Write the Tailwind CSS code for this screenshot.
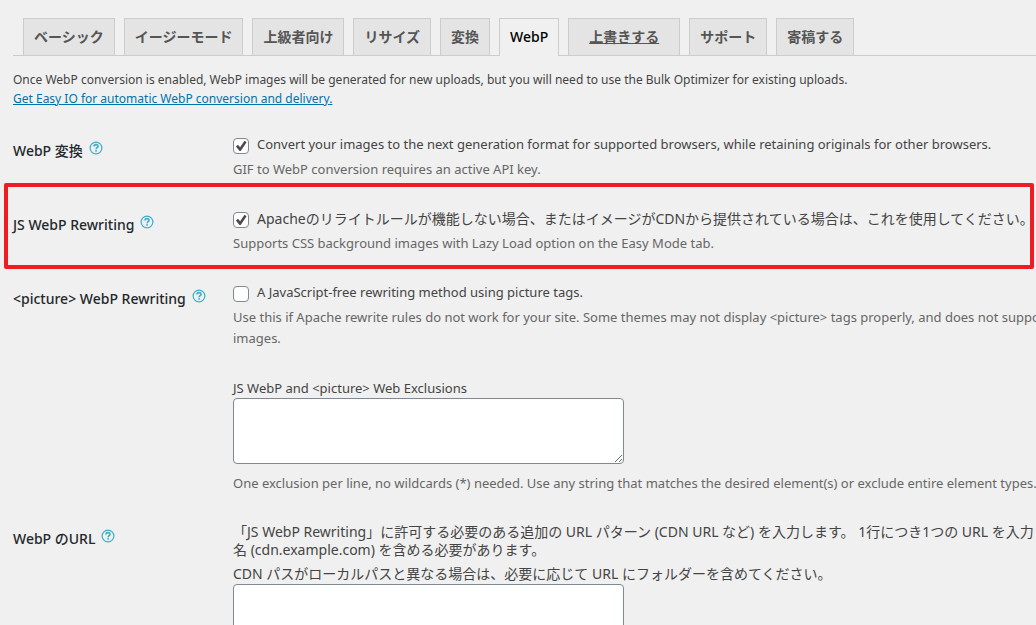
<!DOCTYPE html>
<html lang="ja">
  <head>
    <meta charset="UTF-8" />
    <meta name="viewport" content="width=device-width, initial-scale=1" />
    <title>EWWW Image Optimizer - WebP</title>
    <script src="https://cdn.jsdelivr.net/npm/@tailwindcss/browser@4"></script>
  </head>
  <body
    class="min-h-screen overflow-x-hidden bg-[#f0f0f0] font-['Noto_Sans','Noto_Sans_CJK_JP',sans-serif] text-[13px] text-[#444]"
  >
    <!-- Shared icons -->
    <svg class="hidden">
      <symbol id="help" viewBox="0 0 14 14">
        <circle cx="7" cy="7" r="5.9" fill="none" stroke="currentColor" stroke-width="1.2" />
        <path
          d="M5 5.5C5 4.2 5.9 3.6 7 3.6S9 4.3 9 5.4C9 6.7 7.1 6.7 7.1 8.3"
          fill="none"
          stroke="currentColor"
          stroke-width="1.6"
        />
        <rect x="6.3" y="9.1" width="1.6" height="1.6" fill="currentColor" />
      </symbol>
      <symbol id="check" viewBox="0 0 16 16">
        <path d="M2.9 8.4L5 6.8L7.1 9.3L11.5 2.8L13.6 4.2L7.7 13H6.5Z" fill="currentColor" />
      </symbol>
    </svg>

    <main class="pt-[18px] pl-[13px]">
      <!-- Tabs -->
      <nav
        class="flex gap-[9px] border-b border-[#ccc] pl-[10px] text-sm leading-9 font-bold whitespace-nowrap text-[#555]"
      >
        <button type="button" class="border border-b-0 border-[#ccc] bg-[#e4e4e4] px-[10px]">ベーシック</button>
        <button type="button" class="border border-b-0 border-[#ccc] bg-[#e4e4e4] px-[10px]">イージーモード</button>
        <button type="button" class="border border-b-0 border-[#ccc] bg-[#e4e4e4] px-[10px]">上級者向け</button>
        <button type="button" class="border border-b-0 border-[#ccc] bg-[#e4e4e4] px-[10px]">リサイズ</button>
        <button type="button" class="border border-b-0 border-[#ccc] bg-[#e4e4e4] px-[10px]">変換</button>
        <button
          type="button"
          class="-mb-px border border-b-0 border-[#ccc] bg-[#f0f0f0] px-[10px] pb-px font-medium text-black"
        >
          WebP
        </button>
        <a href="#" class="border border-b-0 border-[#ccc] bg-[#e4e4e4] px-5 underline decoration-[#0073aa]"
          >上書きする</a
        >
        <button type="button" class="border border-b-0 border-[#ccc] bg-[#e4e4e4] px-[10px]">サポート</button>
        <button type="button" class="border border-b-0 border-[#ccc] bg-[#e4e4e4] px-[10px]">寄稿する</button>
      </nav>

      <p class="mt-[14px] text-xs leading-[19px] whitespace-nowrap">
        Once WebP conversion is enabled, WebP images will be generated for new uploads, but you will need to use the
        Bulk Optimizer for existing uploads.<br />
        <a href="#" class="text-[#0073aa] underline">Get Easy IO for automatic WebP conversion and delivery.</a>
      </p>

      <form class="mt-3 whitespace-nowrap">
        <!-- WebP conversion -->
        <div class="grid grid-cols-[220px_1fr] pt-[15px] pb-[14px]">
          <div class="flex items-start gap-[6px] pt-[6px] text-sm leading-5 font-medium text-[#23282d]">
            <label for="webp">WebP 変換</label>
            <a href="#" aria-label="Help" class="text-[#3eadc9]"><svg class="size-[14px]"><use href="#help" /></svg></a>
          </div>
          <div>
            <label class="flex items-end gap-2 leading-[19px]">
              <span class="grid">
                <input
                  id="webp"
                  type="checkbox"
                  checked
                  class="peer col-start-1 row-start-1 size-4 appearance-none rounded-[4px] border border-[#7e8993] bg-white"
                />
                <svg
                  class="pointer-events-none invisible col-start-1 row-start-1 size-4 text-[#50484a] peer-checked:visible"
                >
                  <use href="#check" />
                </svg>
              </span>
              Convert your images to the next generation format for supported browsers, while retaining originals for
              other browsers.
            </label>
            <p class="mt-[5px] leading-[21px] text-[#666]">GIF to WebP conversion requires an active API key.</p>
          </div>
        </div>

        <!-- JS rewriting, highlighted -->
        <div class="relative grid grid-cols-[220px_1fr] pt-[15px] pb-[14px]">
          <div
            class="pointer-events-none absolute -top-[11px] right-[2px] -bottom-px -left-[9px] rounded-[2px] border-4 border-[#f01c24]"
          ></div>
          <div class="flex items-start gap-[6px] pt-[6px] text-sm leading-5 font-medium text-[#23282d]">
            <label for="webp-js">JS WebP Rewriting</label>
            <a href="#" aria-label="Help" class="text-[#3eadc9]"><svg class="size-[14px]"><use href="#help" /></svg></a>
          </div>
          <div>
            <label class="flex items-end gap-2 leading-[19px]">
              <span class="grid">
                <input
                  id="webp-js"
                  type="checkbox"
                  checked
                  class="peer col-start-1 row-start-1 size-4 appearance-none rounded-[4px] border border-[#7e8993] bg-white"
                />
                <svg
                  class="pointer-events-none invisible col-start-1 row-start-1 size-4 text-[#50484a] peer-checked:visible"
                >
                  <use href="#check" />
                </svg>
              </span>
              <span class="text-sm leading-[19px]"
                >Apacheのリライトルールが機能しない場合、またはイメージがCDNから提供されている場合は、これを使用してください。</span
              >
            </label>
            <p class="mt-[5px] leading-[21px] text-[#666]">
              Supports CSS background images with Lazy Load option on the Easy Mode tab.
            </p>
          </div>
        </div>

        <!-- Picture rewriting -->
        <div class="grid grid-cols-[220px_1fr] pt-[15px] pb-[14px]">
          <div class="flex items-start gap-[6px] pt-[6px] text-sm leading-5 font-medium text-[#23282d]">
            <label for="webp-picture">&lt;picture&gt; WebP Rewriting</label>
            <a href="#" aria-label="Help" class="text-[#3eadc9]"><svg class="size-[14px]"><use href="#help" /></svg></a>
          </div>
          <div>
            <label class="flex items-end gap-2 leading-[19px]">
              <span class="grid">
                <input
                  id="webp-picture"
                  type="checkbox"
                  class="peer col-start-1 row-start-1 size-4 appearance-none rounded-[4px] border border-[#7e8993] bg-white"
                />
                <svg
                  class="pointer-events-none invisible col-start-1 row-start-1 size-4 text-[#50484a] peer-checked:visible"
                >
                  <use href="#check" />
                </svg>
              </span>
              A JavaScript-free rewriting method using picture tags.
            </label>
            <p class="mt-[5px] leading-[21px] text-[#666]">
              Use this if Apache rewrite rules do not work for your site. Some themes may not display &lt;picture&gt;
              tags properly, and does not support CSS background<br />images.
            </p>
          </div>
        </div>

        <!-- Exclusions -->
        <div class="pt-[15px] pb-[14px] pl-[220px]">
          <label for="exclusions" class="block leading-5">JS WebP and &lt;picture&gt; Web Exclusions</label>
          <textarea
            id="exclusions"
            class="block h-[66px] w-[391px] rounded-[4px] border border-[#7e8993] bg-white px-2 py-1"
          ></textarea>
          <p class="mt-[9px] leading-[21px] text-[#666]">
            One exclusion per line, no wildcards (*) needed. Use any string that matches the desired element(s) or
            exclude entire element types.
          </p>
        </div>

        <!-- WebP URLs -->
        <div class="grid grid-cols-[220px_1fr] pt-[15px]">
          <div class="flex items-start gap-[6px] pt-[6px] text-sm leading-5 font-medium text-[#23282d]">
            <label for="webp-paths">WebP のURL</label>
            <a href="#" aria-label="Help" class="text-[#3eadc9]"><svg class="size-[14px]"><use href="#help" /></svg></a>
          </div>
          <div>
            <p class="text-sm leading-[18px]">
              「JS WebP Rewriting」に許可する必要のある追加の URL パターン (CDN URL など) を入力します。
              1行につき1つの URL を入力してください。ドメイン<br />名 (cdn.example.com) を含める必要があります。
            </p>
            <p class="mt-[5px] text-sm leading-5">
              CDN パスがローカルパスと異なる場合は、必要に応じて URL にフォルダーを含めてください。
            </p>
            <textarea
              id="webp-paths"
              class="block h-[66px] w-[391px] rounded-[4px] border border-[#7e8993] bg-white px-2 py-1"
            ></textarea>
          </div>
        </div>
      </form>
    </main>
  </body>
</html>
